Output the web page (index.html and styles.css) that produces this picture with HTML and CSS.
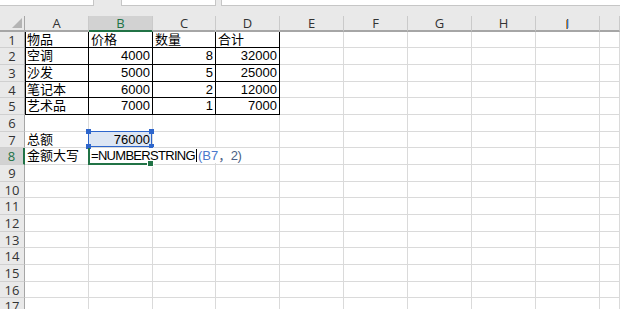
FILE: index.html
```html
<!DOCTYPE html>
<html lang="zh-CN">
<head>
    <meta charset="UTF-8">
    <title>金额大写</title>
    <link rel="stylesheet" href="styles.css">
</head>
<body>
    <div class="topbar">
        <div class="box name-box"></div>
        <div class="box fx-box"></div>
        <div class="box formula-box"></div>
    </div>

    <div class="sheet">
        <!-- column headers -->
        <div class="hd corner"><svg width="10" height="10" viewBox="0 0 10 10"><polygon points="10,0 10,10 0,10" fill="#b4b4b4"/></svg></div>
        <div class="hd">A</div>
        <div class="hd sel">B</div>
        <div class="hd">C</div>
        <div class="hd">D</div>
        <div class="hd">E</div>
        <div class="hd">F</div>
        <div class="hd">G</div>
        <div class="hd">H</div>
        <div class="hd">I<span class="ime"></span></div>
        <div class="hd"></div>

        <div class="rh">1</div>
        <div class="c t first">物品</div><div class="c t">价格</div><div class="c t">数量</div><div class="c t">合计</div>
        <div class="c"></div><div class="c"></div><div class="c"></div><div class="c"></div><div class="c"></div><div class="c"></div>

        <div class="rh">2</div>
        <div class="c t first">空调</div><div class="c t num">4000</div><div class="c t num">8</div><div class="c t num">32000</div>
        <div class="c"></div><div class="c"></div><div class="c"></div><div class="c"></div><div class="c"></div><div class="c"></div>

        <div class="rh">3</div>
        <div class="c t first">沙发</div><div class="c t num">5000</div><div class="c t num">5</div><div class="c t num">25000</div>
        <div class="c"></div><div class="c"></div><div class="c"></div><div class="c"></div><div class="c"></div><div class="c"></div>

        <div class="rh">4</div>
        <div class="c t first">笔记本</div><div class="c t num">6000</div><div class="c t num">2</div><div class="c t num">12000</div>
        <div class="c"></div><div class="c"></div><div class="c"></div><div class="c"></div><div class="c"></div><div class="c"></div>

        <div class="rh">5</div>
        <div class="c t first">艺术品</div><div class="c t num">7000</div><div class="c t num">1</div><div class="c t num">7000</div>
        <div class="c"></div><div class="c"></div><div class="c"></div><div class="c"></div><div class="c"></div><div class="c"></div>

        <div class="rh">6</div>
        <div class="c"></div><div class="c"></div><div class="c"></div><div class="c"></div>
        <div class="c"></div><div class="c"></div><div class="c"></div><div class="c"></div><div class="c"></div><div class="c"></div>

        <div class="rh">7</div>
        <div class="c">总额</div>
        <div class="c num ref-cell">76000<span class="ref"><i class="h tl"></i><i class="h tr"></i><i class="h bl"></i><i class="h br"></i></span></div>
        <div class="c"></div><div class="c"></div>
        <div class="c"></div><div class="c"></div><div class="c"></div><div class="c"></div><div class="c"></div><div class="c"></div>

        <div class="rh sel">8</div>
        <div class="c">金额大写</div>
        <div class="c edit"><span class="edit-text">=NUMBERSTRING<span class="caret"></span><span class="arg">(B7</span><span class="arg2">，2)</span></span><span class="active"><i class="fill"></i></span></div>
        <div class="c"></div><div class="c"></div>
        <div class="c"></div><div class="c"></div><div class="c"></div><div class="c"></div><div class="c"></div><div class="c"></div>

        <div class="rh">9</div><div class="c"></div><div class="c"></div><div class="c"></div><div class="c"></div><div class="c"></div><div class="c"></div><div class="c"></div><div class="c"></div><div class="c"></div><div class="c"></div>
        <div class="rh">10</div><div class="c"></div><div class="c"></div><div class="c"></div><div class="c"></div><div class="c"></div><div class="c"></div><div class="c"></div><div class="c"></div><div class="c"></div><div class="c"></div>
        <div class="rh">11</div><div class="c"></div><div class="c"></div><div class="c"></div><div class="c"></div><div class="c"></div><div class="c"></div><div class="c"></div><div class="c"></div><div class="c"></div><div class="c"></div>
        <div class="rh">12</div><div class="c"></div><div class="c"></div><div class="c"></div><div class="c"></div><div class="c"></div><div class="c"></div><div class="c"></div><div class="c"></div><div class="c"></div><div class="c"></div>
        <div class="rh">13</div><div class="c"></div><div class="c"></div><div class="c"></div><div class="c"></div><div class="c"></div><div class="c"></div><div class="c"></div><div class="c"></div><div class="c"></div><div class="c"></div>
        <div class="rh">14</div><div class="c"></div><div class="c"></div><div class="c"></div><div class="c"></div><div class="c"></div><div class="c"></div><div class="c"></div><div class="c"></div><div class="c"></div><div class="c"></div>
        <div class="rh">15</div><div class="c"></div><div class="c"></div><div class="c"></div><div class="c"></div><div class="c"></div><div class="c"></div><div class="c"></div><div class="c"></div><div class="c"></div><div class="c"></div>
        <div class="rh">16</div><div class="c"></div><div class="c"></div><div class="c"></div><div class="c"></div><div class="c"></div><div class="c"></div><div class="c"></div><div class="c"></div><div class="c"></div><div class="c"></div>
        <div class="rh">17</div><div class="c"></div><div class="c"></div><div class="c"></div><div class="c"></div><div class="c"></div><div class="c"></div><div class="c"></div><div class="c"></div><div class="c"></div><div class="c"></div>
    </div>
</body>
</html>
```

FILE: styles.css
```css
/* Excel-like sheet */
body {
    margin: 0;
    background-color: #fff;
    font-family: "Liberation Sans", "Noto Sans CJK SC", sans-serif;
    font-size: 13px;
    color: #000;
    overflow: hidden;
}

.topbar {
    display: flex;
    height: 16px;
    background-color: #e9e9e9;
}

.box {
    height: 6px;
    background-color: #fff;
    border: 1px solid #c6c6c6;
    border-top: none;
    box-sizing: border-box;
}

.name-box {
    width: 94px;
    border-left: none;
}

.fx-box {
    width: 95px;
    margin-left: 27px;
}

.formula-box {
    flex: 1;
    margin-left: 5px;
    border-right: none;
}

.sheet {
    display: grid;
    grid-template-columns: 25px 64px 64px 63px 64px 64px 64px 64px 64px 64px 1fr;
    grid-template-rows: 15.67px;
    grid-auto-rows: 16.667px;
}

.hd {
    background-color: #e9e9e9;
    border-right: 1px solid #cacaca;
    border-bottom: 2px solid #a6a6a6;
    box-sizing: border-box;
    text-align: center;
    line-height: 14px;
    font-family: "Open Sans", "Liberation Sans", sans-serif;
    font-size: 13px;
    color: #333;
    position: relative;
}

.hd.corner {
    border-right: 1px solid #a6a6a6;
    text-align: right;
    padding: 2px 2px 0 0;
    line-height: 0;
}

.hd.sel {
    background-color: #d2d2d2;
    color: #217346;
    border-bottom-color: #217346;
}

.ime {
    position: absolute;
    left: 30px;
    top: 4px;
    width: 2px;
    height: 9px;
    background: linear-gradient(to right, #d98a2b 50%, #3a6fc4 50%);
}

.rh {
    background-color: #e9e9e9;
    border-right: 1px solid #a6a6a6;
    border-bottom: 1px solid #d0d0d0;
    box-sizing: border-box;
    text-align: center;
    font-family: "Open Sans", "Liberation Sans", sans-serif;
    font-size: 13px;
    line-height: 16px;
    color: #333;
}

.rh.sel {
    background-color: #d2d2d2;
    color: #217346;
    border-right: 2px solid #217346;
}

.c {
    border-right: 1px solid #dadada;
    border-bottom: 1px solid #dadada;
    box-sizing: border-box;
    padding: 0 2px;
    line-height: 16px;
    white-space: nowrap;
    position: relative;
}

.c.num {
    text-align: right;
}

.c.t {
    border-right-color: #000;
    border-bottom-color: #000;
}

.c.t.first {
    box-shadow: inset 1px 0 #000;
}

.ref-cell {
    background-color: #dde6f4;
}

.ref {
    position: absolute;
    left: -1px;
    top: -1px;
    right: 0;
    bottom: 0;
    border: 1px solid #2e66cc;
}

.h {
    position: absolute;
    width: 5px;
    height: 5px;
    background-color: #2e66cc;
}

.h.tl { left: -3px; top: -3px; }
.h.tr { right: -3px; top: -3px; }
.h.bl { left: -3px; bottom: -3px; }
.h.br { right: -3px; bottom: -3px; }

.edit {
    overflow: visible;
    z-index: 2;
}

.edit-text {
    position: relative;
    z-index: 2;
    display: inline-block;
    background-color: #fff;
    padding-right: 4px;
    height: 15px;
    letter-spacing: -0.7px;
}

.caret {
    display: inline-block;
    width: 1px;
    height: 13px;
    margin: 0 1px 0 1px;
    background-color: #000;
    vertical-align: -2px;
}

.arg {
    color: #4a78cc;
    letter-spacing: 0;
}

.arg2 {
    color: #4a5f86;
    letter-spacing: -0.5px;
}

.active {
    position: absolute;
    left: -1px;
    top: 0;
    width: 64px;
    bottom: -1px;
    border-left: 2px solid #217346;
    border-bottom: 2px solid #217346;
    box-sizing: border-box;
    z-index: 3;
}

.fill {
    position: absolute;
    right: -2px;
    bottom: -4px;
    width: 5px;
    height: 5px;
    background-color: #217346;
    border: 1px solid #fff;
}
```
